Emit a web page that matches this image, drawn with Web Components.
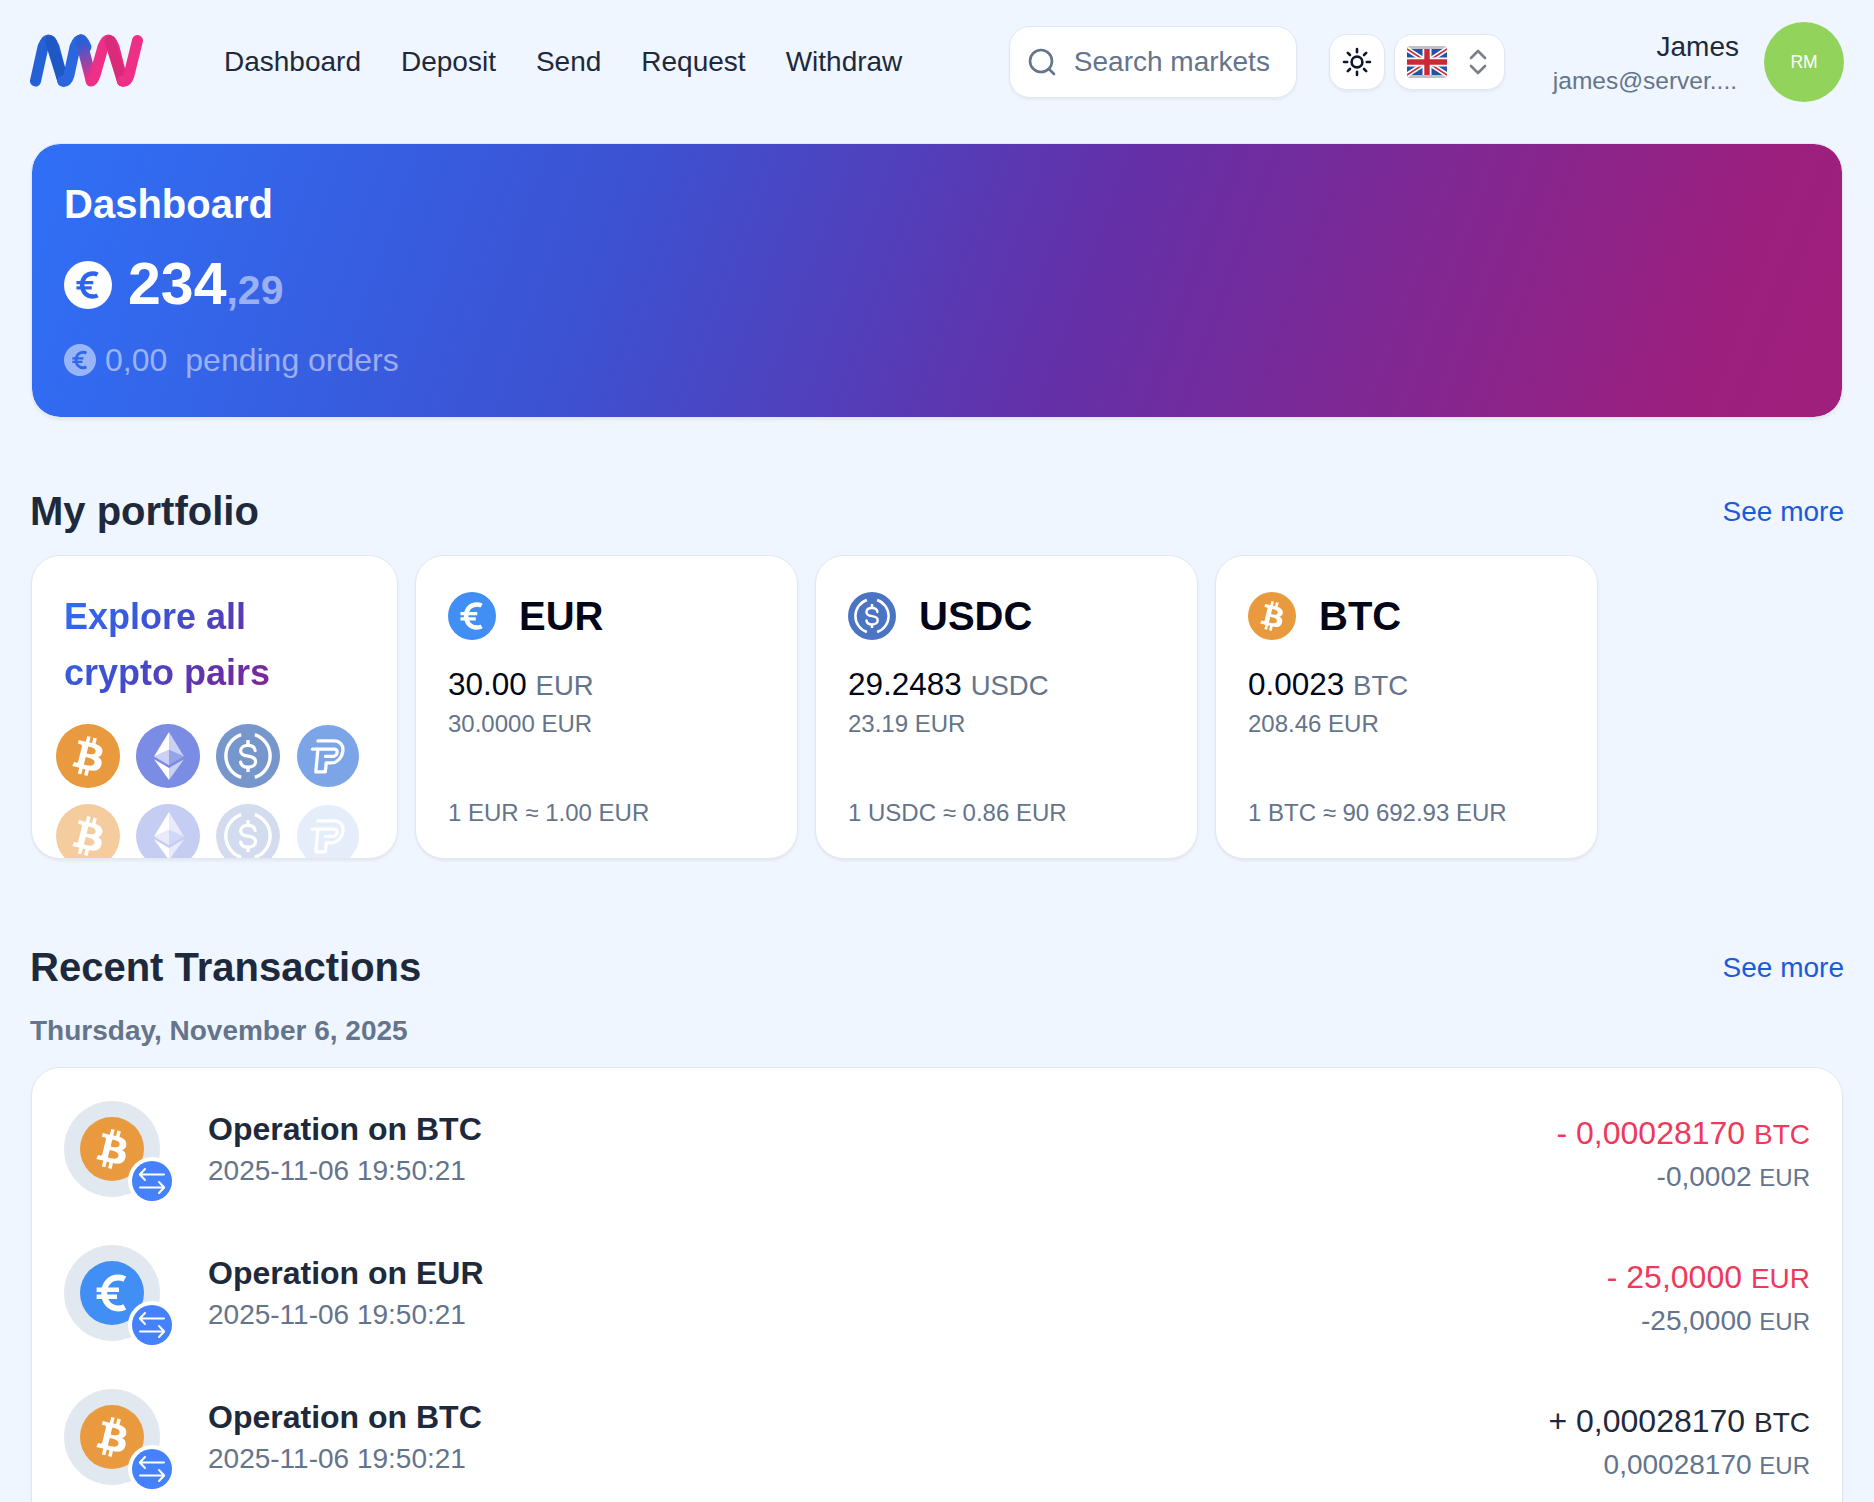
<!DOCTYPE html>
<html lang="en"><head><meta charset="utf-8"><title>Dashboard</title>
<style>
html,body{margin:0;height:1502px;overflow:hidden;background:#eff6ff}
body{font-family:"Liberation Sans",Arial,sans-serif;color:#1e293b}
</style></head>
<body>
<mw-app></mw-app>
<script>
const SANS='"Liberation Sans",Arial,sans-serif';
const GRAD='#2f70f7 0%,#3c52d2 32%,#6430a8 58%,#9c1f7e 92%,#a01f7c 100%';
const GLYPHS={
btc:`<path fill="#fff" d="M23.189 14.02c.314-2.096-1.283-3.223-3.465-3.975l.708-2.84-1.728-.43-.69 2.765c-.454-.114-.92-.22-1.385-.326l.695-2.783L15.596 6l-.708 2.839c-.376-.086-.746-.17-1.104-.26l.002-.009-2.384-.595-.46 1.846s1.283.294 1.256.312c.7.175.826.638.805 1.006l-.806 3.235c.048.012.11.03.18.057l-.183-.045-1.13 4.532c-.086.212-.303.531-.793.41.018.025-1.256-.313-1.256-.313l-.858 1.978 2.25.561c.418.105.828.215 1.231.318l-.715 2.872 1.727.43.708-2.84c.472.127.93.245 1.378.357l-.706 2.828 1.728.43.715-2.866c2.948.558 5.164.333 6.097-2.333.752-2.146-.037-3.385-1.588-4.192 1.13-.26 1.98-1.003 2.207-2.538zm-3.95 5.538c-.533 2.147-4.148.986-5.32.695l.95-3.805c1.172.293 4.929.872 4.37 3.11zm.535-5.569c-.487 1.953-3.495.96-4.47.717l.86-3.45c.975.243 4.118.696 3.61 2.733z"/>`,
eth:`<g fill="#fff"><path fill-opacity=".602" d="M16.498 4v8.87l7.497 3.35z"/><path d="M16.498 4L9 16.22l7.498-3.35z"/><path fill-opacity=".602" d="M16.498 21.968v6.027L24 17.616z"/><path d="M16.498 27.995v-6.028L9 17.616z"/><path fill-opacity=".2" d="M16.498 20.573l7.497-4.353-7.497-3.348z"/><path fill-opacity=".602" d="M9 16.22l7.498 4.353v-7.701z"/></g>`,
usdc:`<g fill="none" stroke="#fff"><path stroke-width="1.7" d="M12.6 5.3A11.3 11.3 0 0 0 12.6 26.7M19.4 5.3A11.3 11.3 0 0 1 19.4 26.7"/><path stroke-width="1.6" stroke-linecap="round" d="M19.6 13.3c-.2-1.6-1.6-2.6-3.6-2.6-2.2 0-3.7 1.1-3.7 2.8 0 1.8 1.6 2.3 3.7 2.6 2.2.3 3.8.9 3.8 2.7 0 1.7-1.6 2.8-3.8 2.8-2.1 0-3.5-1-3.7-2.6"/><path stroke-width="1.7" d="M16 8v2.7M16 21.3V24"/></g>`,
pp:`<g fill="none" stroke="#fff" stroke-width="1.7" stroke-linejoin="round" stroke-linecap="round"><path d="M10.8 8.2h8.4c2.8 0 4.8 2.2 4.5 5-.3 3.4-2.9 6.4-6 6.4h-2.6l-.5 4.6H9.7l1-10.6"/><path d="M8 12.5h11.4c1 0 1.4.7 1.3 1.6-.1 1.2-1.1 2.1-2.4 2.1h-3.6"/></g>`,
eur:`<g fill="none" stroke="#fff" stroke-linecap="butt"><path stroke-width="3" d="M22.4 9.1c-.9-.5-2-.8-3.2-.8-4.4 0-7.1 3.3-7.1 7.7s2.7 7.7 7.1 7.7c1.2 0 2.3-.3 3.2-.8"/><path stroke-width="2.2" d="M8.3 14.4h11.2M8.3 17.9h10.2"/></g>`};
const BG={btc:'#e99a3f',eth:'#7b8ce4',usdc:'#7796cc',pp:'#7ca5e8',eur:'#418ff5',usdcd:'#4b75c3'};
function shadow(el,html){el.attachShadow({mode:'open'}).innerHTML=html}

class CoinIcon extends HTMLElement{connectedCallback(){
 const t=this.getAttribute('type'),s=this.getAttribute('size')||48,bg=this.getAttribute('bg')||BG[t],g=this.getAttribute('ink');
 let glyph=GLYPHS[t.replace('usdcd','usdc')];
 if(g)glyph=glyph.replaceAll('#fff',g);
 shadow(this,`<style>:host{display:block;width:${s}px;height:${s}px;flex:none}svg{display:block}</style><svg width="${s}" height="${s}" viewBox="0 0 32 32"><circle cx="16" cy="16" r="16" fill="${bg}"/>${glyph}</svg>`);
}}
class MwLogo extends HTMLElement{connectedCallback(){shadow(this,`<style>:host{display:block;width:125px;height:60px;flex:none}svg{display:block}</style>
<svg width="125" height="60" viewBox="0 0 125 60" fill="none" stroke-width="11" stroke-linecap="round"><defs><linearGradient id="g" gradientUnits="userSpaceOnUse" x1="50" y1="8" x2="62" y2="50"><stop offset=".05" stop-color="#2a5fd6"/><stop offset=".9" stop-color="#ea2f88"/></linearGradient></defs>
<path d="M5.5 49L13 15Q18.500 1 24 15L33 49" stroke="#2461d6"/><path d="M20.500 9L33 49" stroke="#1f58c4"/><path d="M33 49Q37 50 39 43L45 15Q50.500 1 56 15" stroke="#2a66de"/>
<path d="M51 8L61 47" stroke="url(#g)" stroke-width="11.5"/><path d="M61 49Q63 49 65 43L73 15Q78.500 1 84 15L92.500 49" stroke="#ee2f87"/><path d="M80 9L92.500 49" stroke="#d92b7a"/><path d="M92.500 49Q97 50 99 43L107.500 8.500" stroke="#ee2f87"/></svg>`)}}
class MainNav extends HTMLElement{connectedCallback(){shadow(this,`<style>:host{display:flex;gap:40px;font-size:28px;color:#1e293b;line-height:40px}</style><slot></slot>`)}}
class SearchBox extends HTMLElement{connectedCallback(){shadow(this,`<style>:host{display:flex;align-items:center;box-sizing:border-box;width:288px;height:72px;background:#fff;border:1.75px solid #e2e8f0;border-radius:21px;box-shadow:0 2px 3px rgba(15,23,42,.05);padding-left:18px;gap:18px;font-size:28px;color:#64748b}svg{display:block;flex:none}</style>
<svg width="28" height="28" viewBox="0 0 28 28" fill="none" stroke="#64748b" stroke-width="2.6" stroke-linecap="round"><circle cx="13" cy="13" r="11"/><path d="M21 21l5 5"/></svg><span>Search markets</span>`)}}
class ThemeBtn extends HTMLElement{connectedCallback(){shadow(this,`<style>:host{display:flex;align-items:center;justify-content:center;box-sizing:border-box;width:56px;height:56px;background:#fff;border:1.75px solid #e2e8f0;border-radius:18px;box-shadow:0 2px 3px rgba(15,23,42,.05)}svg{display:block}</style>
<svg width="30" height="30" viewBox="0 0 30 30" fill="none" stroke="#0f172a" stroke-width="2.6" stroke-linecap="round"><circle cx="15" cy="15" r="5.4"/><path d="M15 2v3.2M15 24.8V28M2 15h3.2M24.8 15H28M5.800 5.800L8 8M22 22l2.200 2.200M5.800 24.200L8 22M22 8l2.200-2.200"/></svg>`)}}
class LangBtn extends HTMLElement{connectedCallback(){shadow(this,`<style>:host{display:flex;align-items:center;box-sizing:border-box;width:111px;height:56px;background:#fff;border:1.75px solid #e2e8f0;border-radius:18px;box-shadow:0 2px 3px rgba(15,23,42,.05);padding-left:12px;gap:22px}svg{display:block;flex:none}</style>
<svg width="40" height="32" viewBox="0 0 40 32"><defs><clipPath id="c"><rect width="40" height="32" rx="3"/></clipPath></defs><g clip-path="url(#c)"><rect width="40" height="32" fill="#c2c2c6"/><rect y="3" width="40" height="26" fill="#2353a8"/><path d="M0 3L40 29M40 3L0 29" stroke="#fff" stroke-width="5"/><path d="M0 3L40 29M40 3L0 29" stroke="#d02c3a" stroke-width="1.6"/><path d="M20 3V29M0 16H40" stroke="#fff" stroke-width="9"/><path d="M20 3V29M0 16H40" stroke="#cc2936" stroke-width="5.4"/></g></svg>
<svg width="18" height="26" viewBox="0 0 18 26" fill="none" stroke="#7c7e88" stroke-width="2.6" stroke-linecap="round" stroke-linejoin="round"><path d="M2 9l7-7 7 7M2 17l7 7 7-7"/></svg>`)}}
class UserChip extends HTMLElement{connectedCallback(){shadow(this,`<style>:host{display:flex;align-items:center;gap:25px}.t{text-align:right;padding-top:3px}.n{font-size:28px;line-height:35px;color:#1e293b}.m{font-size:24.5px;line-height:34px;color:#64748b;margin-right:2px}.a{width:80px;height:80px;border-radius:50%;background:#92d35c;color:#fff;font-size:17.5px;display:flex;align-items:center;justify-content:center}</style>
<div class="t"><div class="n">${this.getAttribute('name')}</div><div class="m">${this.getAttribute('email')}</div></div><div class="a">${this.getAttribute('initials')}</div>`)}}
class AppHeader extends HTMLElement{connectedCallback(){shadow(this,`<style>:host{display:flex;align-items:center;height:124px}.nav{margin-left:69px}.r{margin-left:auto;display:flex;align-items:center}.s{margin-right:32px}.l{margin:0 25px 0 9px}.u{margin-left:23px}</style>
<mw-logo></mw-logo><main-nav class="nav"><slot></slot></main-nav><div class="r"><search-box class="s"></search-box><theme-btn></theme-btn><lang-btn class="l"></lang-btn><user-chip class="u" name="James" email="james@server...." initials="RM"></user-chip></div>`)}}
class HeroCard extends HTMLElement{connectedCallback(){shadow(this,`<style>:host{display:block;box-sizing:border-box;height:275px;margin:19px 1px 0;padding:32px 32px 0;border:1.75px solid #e2e8f0;border-radius:29px;background:linear-gradient(110deg,${GRAD});background-clip:padding-box;box-shadow:0 2px 3px rgba(15,23,42,.06);color:#fff}
h1{margin:0;font-size:40px;line-height:56px;font-weight:700}
.b{display:flex;align-items:center;gap:16px;margin-top:18px;height:70px}.big{font-size:59px;line-height:70px;font-weight:700;padding-top:3px}.big small{font-size:41px;color:rgba(255,255,255,.5);font-weight:700}
.p{display:flex;align-items:center;gap:9px;margin-top:18px;height:44px;font-size:32px;color:rgba(255,255,255,.5)}.p span+span{margin-left:9px}.p coin-icon{opacity:.5}</style>
<h1>Dashboard</h1><div class="b"><coin-icon type="eur" size="48" bg="#fff" ink="#2f65ee"></coin-icon><div class="big">234<small>,29</small></div></div>
<div class="p"><coin-icon type="eur" size="32" bg="#fff" ink="#2f65ee"></coin-icon><span>0,00</span><span>pending orders</span></div>`)}}
class SectionHead extends HTMLElement{connectedCallback(){shadow(this,`<style>:host{display:flex;align-items:center;justify-content:space-between;height:56px}h2{margin:0;font-size:40px;line-height:56px;font-weight:700;color:#1e293b;padding-top:2px}a{font-size:28px;color:#1d5ad8;text-decoration:none;padding-top:4px}</style><h2>${this.getAttribute('title')}</h2><a href="#">See more</a>`)}}
class AssetRow extends HTMLElement{connectedCallback(){shadow(this,`<style>:host{display:flex;gap:17px;margin:17px 0 0 1px}</style><slot></slot>`)}}
class ExploreCard extends HTMLElement{connectedCallback(){
 const row=(o)=>['btc','eth','usdc','pp'].map((t,i)=>`<coin-icon type="${t}" size="${t=='pp'?62:64}" style="${t=='pp'?'margin:1px;':''}opacity:${o[i]}"></coin-icon>`).join('');
 shadow(this,`<style>:host{display:block;box-sizing:border-box;width:367px;height:304px;flex:none;background:#fff;border:1.75px solid #e2e8f0;border-radius:29px;box-shadow:0 2px 3px rgba(15,23,42,.06);overflow:hidden;padding:33px 24px 0}
.t{display:block;margin-left:8px;width:296px;font-size:36px;line-height:56px;font-weight:700;background:linear-gradient(135deg,${GRAD});-webkit-background-clip:text;background-clip:text;color:transparent}
.g{display:grid;grid-template-columns:repeat(4,64px);gap:16px;margin-top:23px}</style>
<div class="t">Explore all<br>crypto pairs</div><div class="g">${row([1,1,1,1])}${row([.5,.43,.33,.2])}</div>`)}}
class AssetCard extends HTMLElement{connectedCallback(){const a=n=>this.getAttribute(n);shadow(this,`<style>:host{display:flex;flex-direction:column;box-sizing:border-box;width:383px;height:304px;flex:none;background:#fff;border:1.75px solid #e2e8f0;border-radius:29px;box-shadow:0 2px 3px rgba(15,23,42,.06);padding:32px 32px 28px}
.h{display:flex;align-items:center;gap:23px;height:56px;font-size:40px;font-weight:700;color:#020617}.a{margin-top:19px;font-size:31.5px;line-height:43px;color:#020617}.a span{font-size:27.5px;color:#64748b}.s{font-size:24px;line-height:33px;color:#64748b}.r{margin-top:auto;font-size:24px;line-height:34px;color:#64748b}</style>
<div class="h"><coin-icon type="${a('coin')}" size="48"></coin-icon><span>${a('sym')}</span></div><div class="a">${a('amt')} <span>${a('sym')}</span></div><div class="s">${a('fiat')}</div><div class="r">${a('rate')}</div>`)}}
class DateLabel extends HTMLElement{connectedCallback(){shadow(this,`<style>:host{display:block;margin-top:17px;font-size:28px;line-height:40px;font-weight:700;color:#64748b}</style><slot></slot>`)}}
class TxList extends HTMLElement{connectedCallback(){shadow(this,`<style>:host{display:flex;flex-direction:column;gap:48px;box-sizing:border-box;min-height:520px;margin:16px 1px 0;background:#fff;border:1.75px solid #e2e8f0;border-radius:29px;box-shadow:0 2px 3px rgba(15,23,42,.06);padding:33px 32px 32px}</style><slot></slot>`)}}
class TxRow extends HTMLElement{connectedCallback(){const a=n=>this.getAttribute(n);shadow(this,`<style>:host{display:flex;align-items:center;height:96px}
.i{position:relative;width:96px;height:96px;flex:none;border-radius:50%;background:#e2e8f0;display:flex;align-items:center;justify-content:center}
.bd{position:absolute;left:64px;top:56px;width:48px;height:48px;display:block}
.m{margin-left:48px}.t{font-size:32px;line-height:44px;font-weight:700;color:#1e293b}.d{font-size:28px;line-height:40px;color:#64748b}
.r{margin-left:auto;text-align:right;padding-top:10px}.v{font-size:32px;line-height:44px;color:${a('tone')=='neg'?'#f0385c':'#1e293b'}}.v span{font-size:28px}.f{font-size:28px;line-height:40px;color:#64748b}.f span{font-size:24px}</style>
<div class="i"><coin-icon type="${a('coin')}" size="64"></coin-icon><svg class="bd" viewBox="0 0 48 48" fill="none"><circle cx="24" cy="24" r="24" fill="#fff"/><circle cx="24" cy="24" r="20" fill="#4481fb"/><path stroke="#fff" stroke-width="2" stroke-linecap="round" stroke-linejoin="round" d="M36 17.500H12M17 12l-5.200 5.500L17 23M12 30.500H36M31 25l5.200 5.500L31 36"/></svg></div>
<div class="m"><div class="t">${a('title')}</div><div class="d">${a('date')}</div></div>
<div class="r"><div class="v">${a('amt')} <span>${a('sym')}</span></div><div class="f">${a('fiat')} <span>EUR</span></div></div>`)}}
class MwApp extends HTMLElement{connectedCallback(){shadow(this,`<style>:host{display:block;padding:0 30px;font-family:${SANS}}.m1{margin-top:64px}.m2{margin-top:79px}</style>
<app-header><span>Dashboard</span><span>Deposit</span><span>Send</span><span>Request</span><span>Withdraw</span></app-header>
<hero-card></hero-card>
<section-head class="m1" title="My portfolio"></section-head>
<asset-row><explore-card></explore-card>
<asset-card coin="eur" sym="EUR" amt="30.00" fiat="30.0000 EUR" rate="1 EUR ≈ 1.00 EUR"></asset-card>
<asset-card coin="usdcd" sym="USDC" amt="29.2483" fiat="23.19 EUR" rate="1 USDC ≈ 0.86 EUR"></asset-card>
<asset-card coin="btc" sym="BTC" amt="0.0023" fiat="208.46 EUR" rate="1 BTC ≈ 90 692.93 EUR"></asset-card></asset-row>
<section-head class="m2" title="Recent Transactions"></section-head>
<date-label>Thursday, November 6, 2025</date-label>
<tx-list>
<tx-row coin="btc" title="Operation on BTC" date="2025-11-06 19:50:21" tone="neg" amt="- 0,00028170" sym="BTC" fiat="-0,0002"></tx-row>
<tx-row coin="eur" title="Operation on EUR" date="2025-11-06 19:50:21" tone="neg" amt="- 25,0000" sym="EUR" fiat="-25,0000"></tx-row>
<tx-row coin="btc" title="Operation on BTC" date="2025-11-06 19:50:21" tone="pos" amt="+ 0,00028170" sym="BTC" fiat="0,00028170"></tx-row>
</tx-list>`)}}
const defs={'coin-icon':CoinIcon,'mw-logo':MwLogo,'main-nav':MainNav,'search-box':SearchBox,'theme-btn':ThemeBtn,'lang-btn':LangBtn,'user-chip':UserChip,'app-header':AppHeader,'hero-card':HeroCard,'section-head':SectionHead,'asset-row':AssetRow,'explore-card':ExploreCard,'asset-card':AssetCard,'date-label':DateLabel,'tx-list':TxList,'tx-row':TxRow,'mw-app':MwApp};
for(const k in defs)customElements.define(k,defs[k]);
</script>
</body></html>
